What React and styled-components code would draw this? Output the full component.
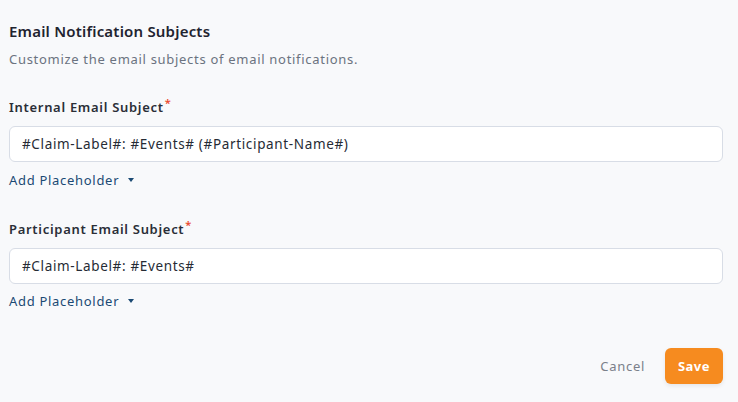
import styled, { createGlobalStyle } from 'styled-components';

const GlobalStyle = createGlobalStyle`
  html, body {
    margin: 0;
    background: #f8f9fb;
  }
  body {
    font-family: "Noto Sans", "Open Sans", sans-serif;
  }
`;

const Page = styled.div`
  box-sizing: border-box;
  width: 100%;
  min-height: 402px;
  padding: 21px 15px 0 9px;
  background: #f8f9fb;
  display: flex;
  flex-direction: column;
`;

const Title = styled.h2`
  margin: 0;
  font-size: 15px;
  line-height: 20px;
  font-weight: 600;
  letter-spacing: 0.2px;
  color: #1f2430;
`;

const Subtitle = styled.p`
  margin: 8px 0 0;
  font-size: 13px;
  line-height: 20px;
  letter-spacing: 0.7px;
  color: #6b7380;
`;

const Field = styled.div`
  margin-top: ${(p) => p.$top}px;
  display: flex;
  flex-direction: column;
  align-items: flex-start;
`;

const Label = styled.label`
  font-size: 13px;
  line-height: 20px;
  font-weight: 600;
  letter-spacing: 0.7px;
  color: #2a2e37;
`;

const Required = styled.sup`
  color: #ea4a2f;
  font-size: 11px;
  line-height: 0;
  margin-left: 1px;
  vertical-align: 5px;
`;

const Input = styled.input`
  box-sizing: border-box;
  width: 100%;
  height: 36px;
  margin-top: 9px;
  padding: 0 12px;
  border: 1px solid #d8dde6;
  border-radius: 6px;
  background: #fff;
  font-family: inherit;
  font-size: 13.5px;
  letter-spacing: 0.65px;
  color: #262b35;
  outline: none;
`;

const PlaceholderLink = styled.button`
  margin-top: ${(p) => p.$gap}px;
  padding: 0;
  border: 0;
  background: none;
  display: flex;
  align-items: center;
  gap: 9px;
  font-family: inherit;
  font-size: 13px;
  line-height: 20px;
  letter-spacing: 0.7px;
  color: #1b4a74;
  cursor: pointer;
`;

const Caret = styled.span`
  width: 0;
  height: 0;
  border-left: 3.5px solid transparent;
  border-right: 3.5px solid transparent;
  border-top: 4px solid #1b4a74;
`;

const Footer = styled.div`
  margin-top: 37px;
  display: flex;
  justify-content: flex-end;
  align-items: center;
`;

const CancelButton = styled.button`
  height: 36px;
  padding: 0 20px;
  border: 0;
  background: none;
  font-family: inherit;
  font-size: 13px;
  letter-spacing: 0.7px;
  color: #7b808a;
  cursor: pointer;
`;

const SaveButton = styled.button`
  height: 36px;
  width: 58px;
  border: 0;
  border-radius: 6px;
  background: #f68b1f;
  box-shadow: 0 2px 4px rgba(0, 0, 0, 0.08);
  font-family: inherit;
  font-size: 13px;
  font-weight: 700;
  letter-spacing: 0.5px;
  color: #fff;
  cursor: pointer;
`;

const fields = [
  { label: 'Internal Email Subject', value: '#Claim-Label#: #Events# (#Participant-Name#)', top: 28, gap: 8 },
  { label: 'Participant Email Subject', value: '#Claim-Label#: #Events#', top: 29, gap: 7 },
];

export default function App() {
  return (
    <>
      <GlobalStyle />
      <Page>
        <Title>Email Notification Subjects</Title>
        <Subtitle>Customize the email subjects of email notifications.</Subtitle>
        {fields.map((f) => (
          <Field key={f.label} $top={f.top}>
            <Label>
              {f.label}
              <Required>*</Required>
            </Label>
            <Input defaultValue={f.value} />
            <PlaceholderLink $gap={f.gap}>
              Add Placeholder
              <Caret />
            </PlaceholderLink>
          </Field>
        ))}
        <Footer>
          <CancelButton>Cancel</CancelButton>
          <SaveButton>Save</SaveButton>
        </Footer>
      </Page>
    </>
  );
}
